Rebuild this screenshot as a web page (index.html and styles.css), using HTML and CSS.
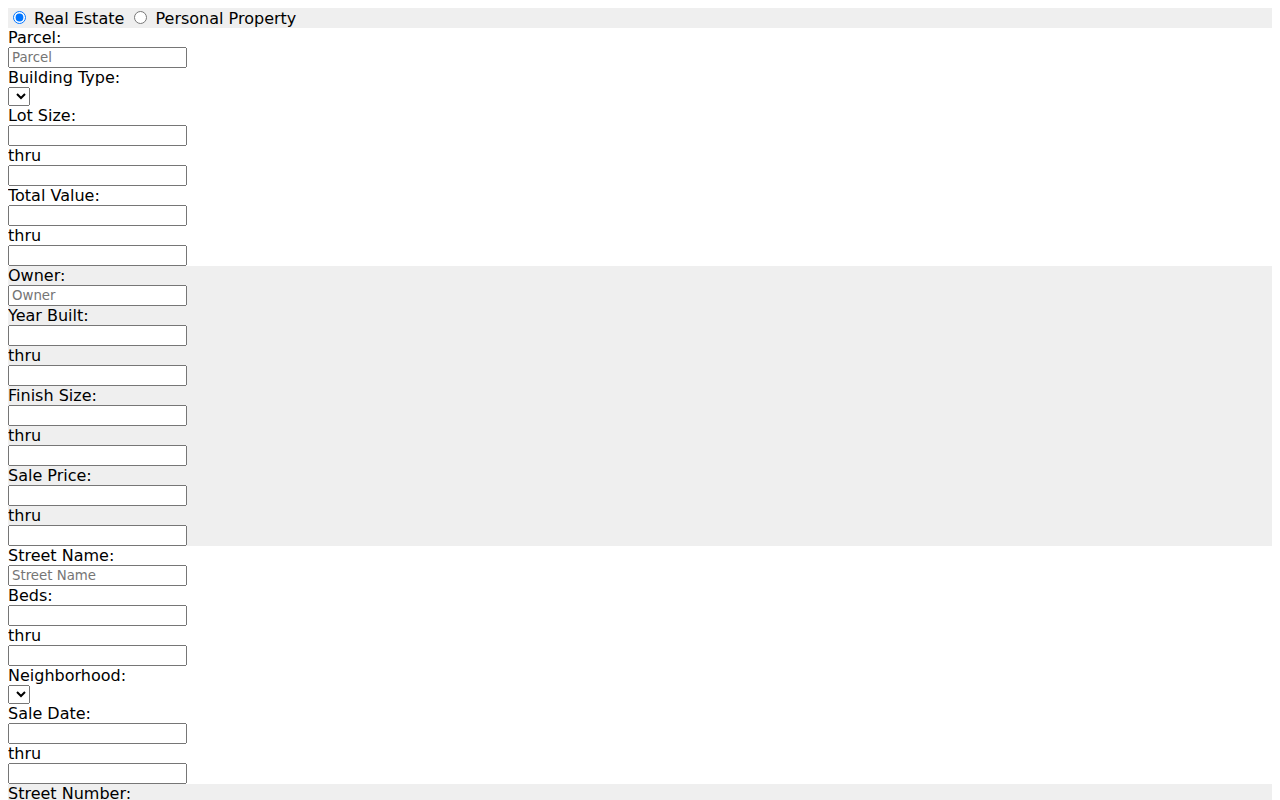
FILE: index.html
```html
<!DOCTYPE html>
<html>
<head>
<meta charset="utf-8">
<link rel="stylesheet" href="styles.css">
</head>
<body>
<form class="search">
  <div class="band band-gray">
    <label class="opt"><input type="radio" name="kind" checked> Real Estate</label>
    <label class="opt"><input type="radio" name="kind"> Personal Property</label>
  </div>
  <div class="band">
    <label class="lbl">Parcel:</label>
    <input class="box" type="text" placeholder="Parcel">
    <label class="lbl">Building Type:</label>
    <select class="sel"></select>
    <label class="lbl">Lot Size:</label>
    <input class="box" type="text">
    <label class="lbl">thru</label>
    <input class="box" type="text">
    <label class="lbl">Total Value:</label>
    <input class="box" type="text">
    <label class="lbl">thru</label>
    <input class="box" type="text">
  </div>
  <div class="band band-gray">
    <label class="lbl">Owner:</label>
    <input class="box" type="text" placeholder="Owner">
    <label class="lbl">Year Built:</label>
    <input class="box" type="text">
    <label class="lbl">thru</label>
    <input class="box" type="text">
    <label class="lbl">Finish Size:</label>
    <input class="box" type="text">
    <label class="lbl">thru</label>
    <input class="box" type="text">
    <label class="lbl">Sale Price:</label>
    <input class="box" type="text">
    <label class="lbl">thru</label>
    <input class="box" type="text">
  </div>
  <div class="band">
    <label class="lbl">Street Name:</label>
    <input class="box" type="text" placeholder="Street Name">
    <label class="lbl">Beds:</label>
    <input class="box" type="text">
    <label class="lbl">thru</label>
    <input class="box" type="text">
    <label class="lbl">Neighborhood:</label>
    <select class="sel"></select>
    <label class="lbl">Sale Date:</label>
    <input class="box" type="text">
    <label class="lbl">thru</label>
    <input class="box" type="text">
  </div>
  <div class="band band-gray">
    <label class="lbl">Street Number:</label>
    <input class="box" type="text" placeholder="Street Number">
    <label class="lbl">Baths:</label>
    <input class="box" type="text">
    <label class="lbl">thru</label>
    <input class="box" type="text">
  </div>
</form>
</body>
</html>
```

FILE: styles.css
```css
body {
  margin: 8px;
  font-family: "DejaVu Sans", sans-serif;
  font-size: 16px;
  color: #000;
  background: #fff;
}
.search {
  margin: 0;
}
.band {
  background: #fff;
}
.band-gray {
  background: #efefef;
}
.lbl {
  display: block;
}
.box {
  display: block;
  box-sizing: border-box;
  width: 179px;
  height: 21px;
  font-family: "DejaVu Sans", sans-serif;
  font-size: 13.33px;
}
.sel {
  display: block;
}
```
